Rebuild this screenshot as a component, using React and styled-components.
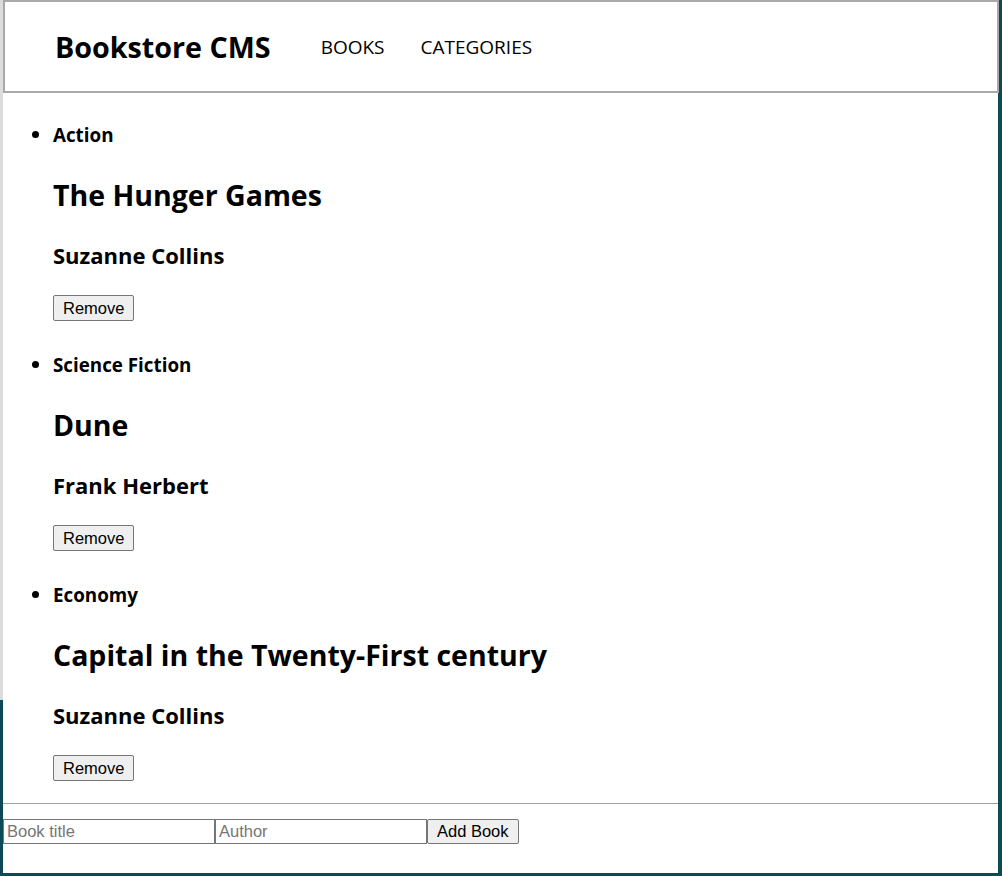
import React, { useState } from 'react';
import styled, { createGlobalStyle } from 'styled-components';

const GlobalStyle = createGlobalStyle`
	html, body {
		margin: 0;
		padding: 0;
	}
	body {
		background: linear-gradient(#dcdcdc, #dcdcdc) 0 0 / 3px 700px no-repeat, #0c4a56;
		font-family: "Open Sans", "Noto Sans", sans-serif;
		color: #000;
	}
`;

const Window = styled.div`
	margin-left: 3px;
	width: 995px;
	height: 873px;
	background: white;
	display: flex;
	flex-direction: column;
`;

const Header = styled.header`
	flex-shrink: 0;
	height: 89px;
	border: 2px solid #a9a9a9;
	display: flex;
	align-items: center;
	padding-left: 50px;
	gap: 50px;
	margin-right: -1px;
`;

const Brand = styled.h1`
	font-size: 28.7px;
	font-weight: 700;
	margin: 0;
`;

const Nav = styled.nav`
	display: flex;
	gap: 36px;
`;

const NavLink = styled.a`
	font-size: 19px;
	color: #000;
	text-decoration: none;
	text-transform: uppercase;
`;

const BookList = styled.ul`
	margin: 0;
	padding: 26px 0 0 50px;
	flex: 1;
	overflow: hidden;
`;

const BookItem = styled.li`
	height: 230px;
	&::marker {
		font-size: 20px;
	}
`;

const Category = styled.h4`
	font-size: 18.8px;
	font-weight: 700;
	margin: 0;
	line-height: 33px;
`;

const Title = styled.h2`
	font-size: 28.5px;
	font-weight: 700;
	margin: 27px 0 0;
	line-height: 32px;
`;

const Author = styled.h3`
	font-size: 22px;
	font-weight: 700;
	margin: 29px 0 0;
	line-height: 30px;
`;

const Button = styled.button`
	font-family: "Liberation Sans", Arial, sans-serif;
	font-size: 16.5px;
	background: #efefef;
	border: 1px solid #767676;
	border-radius: 2px;
	padding: 0 9px;
	height: ${(p) => p.h || 25}px;
	color: #000;
	margin-top: ${(p) => p.gap || 0}px;
`;

const Divider = styled.hr`
	flex-shrink: 0;
	margin: 0;
	border: none;
	border-top: 1px solid #a0a0a0;
	height: 0;
`;

const Form = styled.form`
	flex-shrink: 0;
	display: flex;
	padding-top: 15px;
	height: 54px;
`;

const Input = styled.input`
	font-family: "Liberation Sans", Arial, sans-serif;
	font-size: 16.5px;
	width: 212px;
	height: 25px;
	box-sizing: border-box;
	border: 1px solid #767676;
	padding: 1px 3px;
	&::placeholder {
		color: #757575;
	}
`;

const initialBooks = [
	{ id: 1, category: 'Action', title: 'The Hunger Games', author: 'Suzanne Collins' },
	{ id: 2, category: 'Science Fiction', title: 'Dune', author: 'Frank Herbert' },
	{ id: 3, category: 'Economy', title: 'Capital in the Twenty-First century', author: 'Suzanne Collins' },
];

const App = () => {
	const [books, setBooks] = useState(initialBooks);

	return (
		<Window>
			<GlobalStyle />
			<Header>
				<Brand>Bookstore CMS</Brand>
				<Nav>
					<NavLink href="#books">Books</NavLink>
					<NavLink href="#categories">Categories</NavLink>
				</Nav>
			</Header>
			<BookList>
				{books.map((book) => (
					<BookItem key={book.id}>
						<Category>{book.category}</Category>
						<Title>{book.title}</Title>
						<Author>{book.author}</Author>
						<Button gap={25} h={26} onClick={() => setBooks(books.filter((b) => b.id !== book.id))}>Remove</Button>
					</BookItem>
				))}
			</BookList>
			<Divider />
			<Form onSubmit={(e) => e.preventDefault()}>
				<Input placeholder="Book title" />
				<Input placeholder="Author" />
				<Button type="submit">Add Book</Button>
			</Form>
		</Window>
	);
};

export default App;
